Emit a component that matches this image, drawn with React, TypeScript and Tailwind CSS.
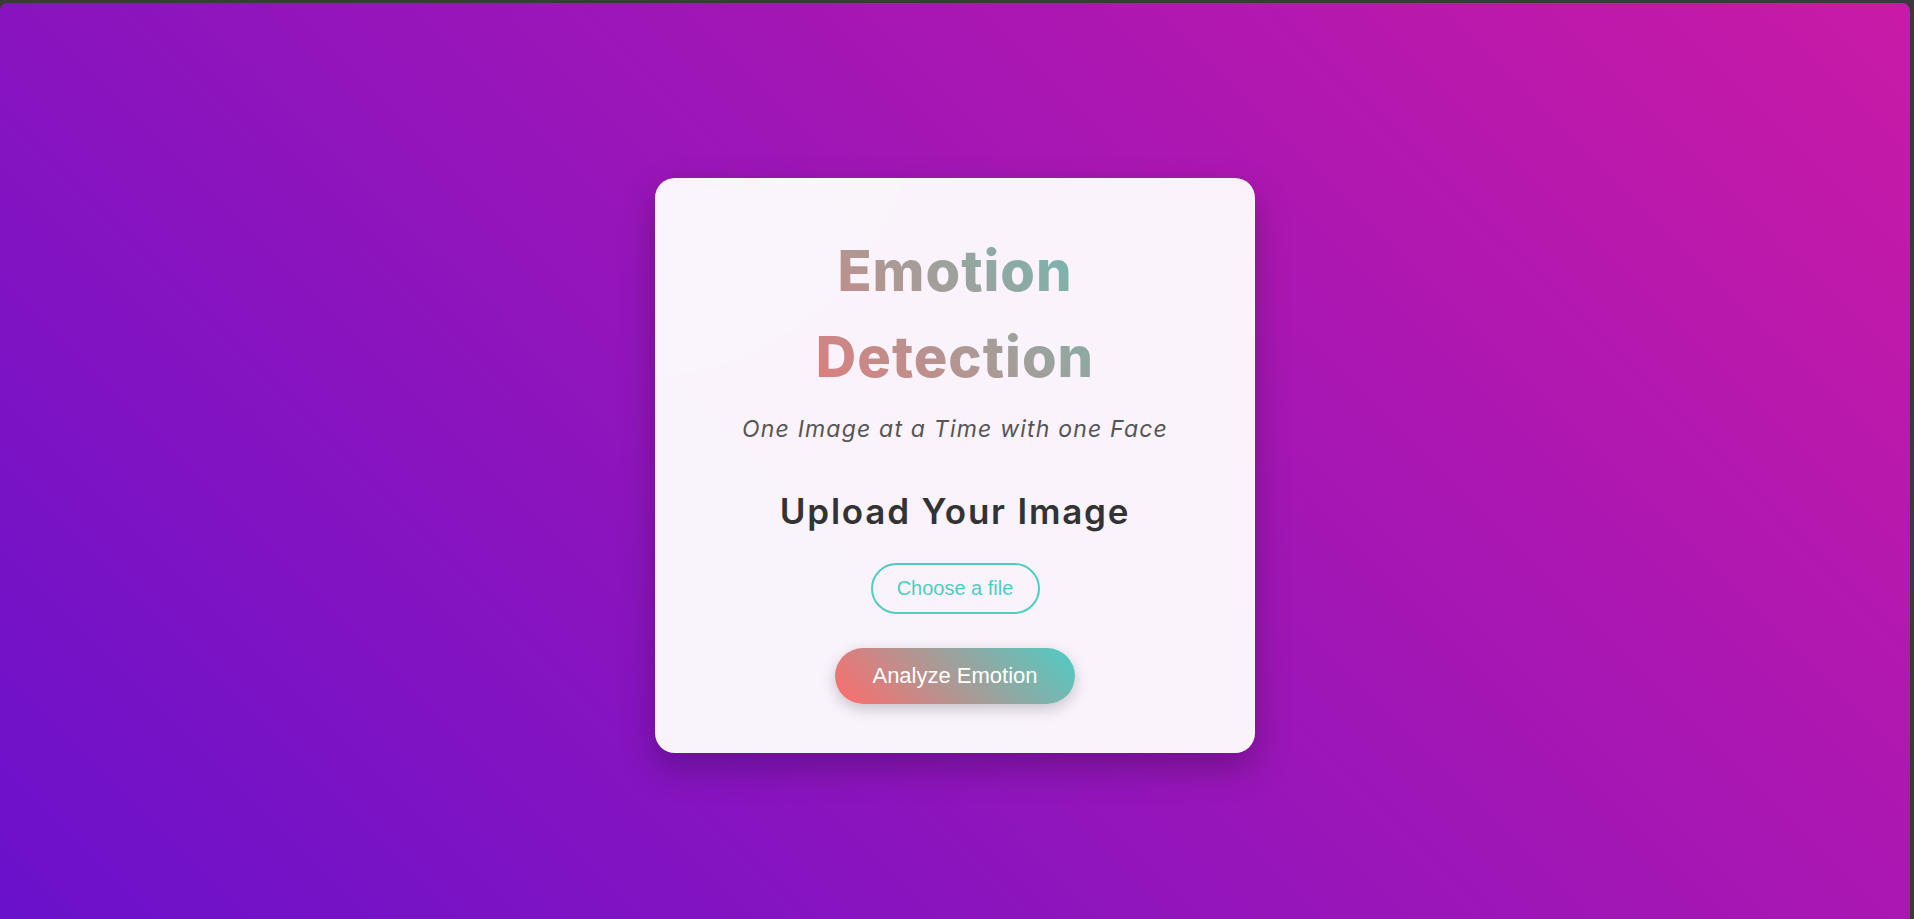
import React from "react";

export default function App() {
  return (
    <div className="h-[919px] w-full overflow-hidden bg-[#3a3a3a] pt-[3px] pr-[4px]">
      <div className="flex h-full w-full items-center justify-center rounded-t-[8px] bg-[linear-gradient(45deg,#6a11cb_0%,#c91aa6_100%)] pt-[8px]">
        <div className="relative w-[600px] overflow-hidden rounded-[20px] bg-white/95 px-10 pt-[50px] pb-[49px] text-center shadow-[0_15px_35px_rgba(0,0,0,0.25)]">
          <div className="pointer-events-none absolute -left-[300px] -top-[360px] h-[560px] w-[560px] rounded-full bg-white/15" />
          <h1 className="relative bg-[linear-gradient(45deg,#ff6b6b,#4ecdc4)] bg-clip-text font-['Inter','Noto_Sans',sans-serif] text-[56px] font-extrabold leading-[86px] tracking-[1px] text-transparent">
            Emotion
            <br />
            Detection
          </h1>
          <p className="relative mt-[12px] font-['Inter','Noto_Sans',sans-serif] text-[23px] italic leading-[34px] tracking-[1.2px] text-[#555]">
            One Image at a Time with one Face
          </p>
          <h2 className="relative mt-[40px] font-['Inter','Noto_Sans',sans-serif] text-[35px] font-semibold leading-[51px] tracking-[1.8px] text-[#333]">
            Upload Your Image
          </h2>
          <div className="relative mt-[26px] flex flex-col items-center">
            <label className="flex h-[51px] w-[169px] cursor-pointer items-center justify-center rounded-full border-2 border-[#4ecdc4] font-['Liberation_Sans',Arial,sans-serif] text-[20px] text-[#4ecdc4]">
              Choose a file
            </label>
            <button className="mt-[34px] flex h-[56px] w-[240px] items-center justify-center rounded-full bg-[linear-gradient(45deg,#ff6b6b,#4ecdc4)] font-['Liberation_Sans',Arial,sans-serif] text-[22px] text-white shadow-[0_5px_15px_rgba(0,0,0,0.2)]">
              Analyze Emotion
            </button>
          </div>
        </div>
      </div>
    </div>
  );
}
